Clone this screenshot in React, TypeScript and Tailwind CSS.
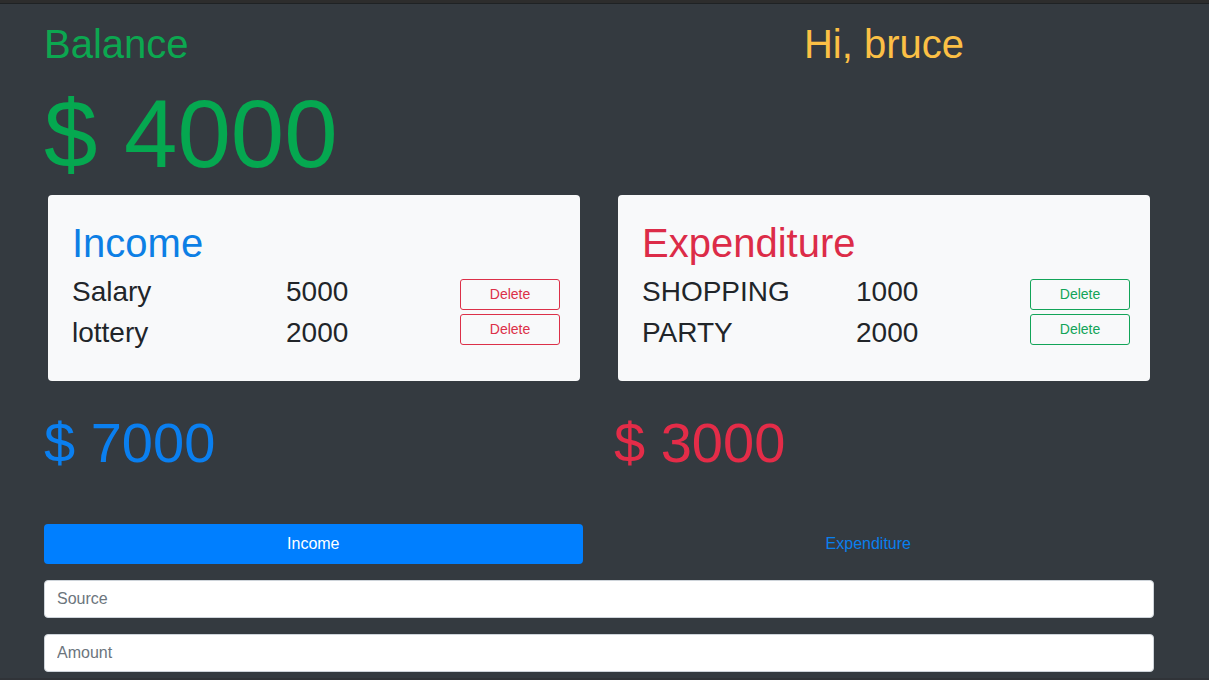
import { useState } from "react";

type Entry = { label: string; amount: number };

const income: Entry[] = [
  { label: "Salary", amount: 5000 },
  { label: "lottery", amount: 2000 },
];

const expenditure: Entry[] = [
  { label: "SHOPPING", amount: 1000 },
  { label: "PARTY", amount: 2000 },
];

function EntryCard({
  title,
  titleClass,
  buttonClass,
  entries,
}: {
  title: string;
  titleClass: string;
  buttonClass: string;
  entries: Entry[];
}) {
  return (
    <section className="m-1 rounded-[4px] bg-[#f8f9fa] py-6 pr-5 pl-6">
      <h2 className={`mb-2 text-[40px] leading-[48px] ${titleClass}`}>{title}</h2>
      <div className="flex text-[28px] leading-[34px] text-[#212529]">
        <ul className="flex w-[214px] flex-col gap-[7px] pb-[7px]">
          {entries.map((entry) => (
            <li key={entry.label}>{entry.label}</li>
          ))}
        </ul>
        <ul className="flex flex-1 flex-col gap-[7px] pb-[7px]">
          {entries.map((entry) => (
            <li key={entry.label}>{entry.amount}</li>
          ))}
        </ul>
        <div className="flex w-[100px] flex-col gap-1 pt-1">
          {entries.map((entry) => (
            <button
              key={entry.label}
              type="button"
              aria-label={`Delete ${entry.label}`}
              className={`rounded-[3px] border px-2 py-1 text-[14px] leading-[21px] ${buttonClass}`}
            >
              Delete
            </button>
          ))}
        </div>
      </div>
    </section>
  );
}

export default function App() {
  const [tab, setTab] = useState("Income");

  return (
    <div className="min-h-screen border-t-3 border-b-2 border-t-[#2d2d2d] border-b-[#303338] bg-[#343a40] font-['Liberation_Sans',Arial,sans-serif]">
      <div className="border-t border-[#1f2224] pr-[11px]">
        <main className="mx-auto max-w-[1140px] px-[15px] pt-4 pb-[6px]">
          <div className="grid grid-cols-2 gap-x-[30px]">
            <header>
              <h1 className="mb-2 text-[40px] leading-[48px] text-[#0ca750]">Balance</h1>
              <p className="text-[96px] leading-[115px] text-[#05a850]">$ 4000</p>
            </header>
            <p className="text-center text-[40px] leading-[48px] text-[#fcc045]">Hi, bruce</p>

            <EntryCard
              title="Income"
              titleClass="text-[#0d7fe5]"
              buttonClass="border-[#dc3048] text-[#dc3048]"
              entries={income}
            />
            <EntryCard
              title="Expenditure"
              titleClass="text-[#dc2c48]"
              buttonClass="border-[#12a458] text-[#12a458]"
              entries={expenditure}
            />

            <p className="mt-6 text-[56px] leading-[67px] text-[#0a7ff0]">$ 7000</p>
            <p className="mt-6 text-[56px] leading-[67px] text-[#e42c48]">$ 3000</p>
          </div>

          <div role="tablist" className="mt-12 mb-4 flex">
            {["Income", "Expenditure"].map((name) => (
              <button
                key={name}
                type="button"
                role="tab"
                aria-selected={tab === name}
                onClick={() => setTab(name)}
                className={`flex-auto rounded-[4px] px-4 py-2 text-[16px] leading-6 ${
                  tab === name ? "bg-[#007fff] text-white" : "text-[#0a7fee]"
                }`}
              >
                {name}
              </button>
            ))}
          </div>

          <form className="flex flex-col gap-4">
            <input
              type="text"
              aria-label="Source"
              placeholder="Source"
              className="w-full rounded-[4px] border border-[#ced4da] bg-white px-3 py-[6px] text-[16px] leading-6 text-[#495057] placeholder:text-[#6c757d]"
            />
            <input
              type="text"
              aria-label="Amount"
              placeholder="Amount"
              className="w-full rounded-[4px] border border-[#ced4da] bg-white px-3 py-[6px] text-[16px] leading-6 text-[#495057] placeholder:text-[#6c757d]"
            />
          </form>
        </main>
      </div>
    </div>
  );
}
